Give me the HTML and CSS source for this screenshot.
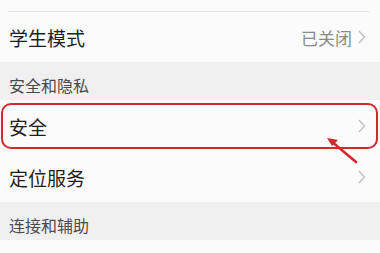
FILE: index.html
```html
<!DOCTYPE html>
<html lang="zh">
<head>
<meta charset="utf-8">
<link rel="stylesheet" href="styles.css">
</head>
<body>
<div class="screen">
  <div class="top"><div class="sep"></div></div>
  <div class="row">
    <span class="label">学生模式</span>
    <span class="right"><span class="value">已关闭</span><svg class="chev" width="8" height="14" viewBox="0 0 8 14"><path d="M1 1 L6.5 7 L1 13" fill="none" stroke="#c0c0c0" stroke-width="1.4"/></svg></span>
  </div>
  <div class="section">安全和隐私</div>
  <div class="row hl">
    <span class="label">安全</span>
    <span class="right"><svg class="chev" width="8" height="14" viewBox="0 0 8 14"><path d="M1 1 L6.5 7 L1 13" fill="none" stroke="#c0c0c0" stroke-width="1.4"/></svg></span>
    <div class="box"></div>
    <svg class="arrow" width="40" height="36" viewBox="0 0 40 36"><path d="M30 30 L5 9" stroke="#d3282c" stroke-width="2.6" stroke-linecap="round"/><path d="M1 6 L12 8 L6 14 Z" fill="#d3282c"/></svg>
  </div>
  <div class="row">
    <span class="label">定位服务</span>
    <span class="right"><svg class="chev" width="8" height="14" viewBox="0 0 8 14"><path d="M1 1 L6.5 7 L1 13" fill="none" stroke="#c0c0c0" stroke-width="1.4"/></svg></span>
  </div>
  <div class="section">连接和辅助</div>
  <div class="row"></div>
</div>
</body>
</html>
```
FILE: styles.css
```css
html, body { margin: 0; padding: 0; background: #fbfbfb; }
body { font-family: "Noto Sans CJK SC", "Noto Sans", sans-serif; overflow: hidden; }
.screen { width: 380px; height: 253px; overflow: hidden; }
.top { height: 12px; display: flex; align-items: flex-end; padding: 0 10px 0 8px; }
.sep { flex: 1; height: 1px; background: #e8e8e8; }
.row {
  position: relative;
  height: 50px;
  display: flex;
  align-items: center;
  justify-content: space-between;
  padding: 0 14px 0 9px;
  background: #fbfbfb;
}
.row.hl { height: 52px; z-index: 2; }
.label { font-size: 19px; color: #1e1e1e; line-height: 1; }
.right { display: flex; align-items: center; gap: 6px; }
.value { font-size: 17px; color: #8a8a8a; line-height: 1; }
.chev { display: block; }
.section {
  height: 38px;
  box-sizing: border-box;
  padding: 14px 0 0 9px;
  background: #f0f0f0;
  font-size: 16px;
  line-height: 18px;
  color: #4a4a4a;
}
.box {
  position: absolute;
  left: 1px; right: 2px; top: 3px; bottom: 3px;
  border: 2px solid #d3282c;
  border-radius: 10px;
}
.arrow { position: absolute; left: 326px; top: 32px; }
```
